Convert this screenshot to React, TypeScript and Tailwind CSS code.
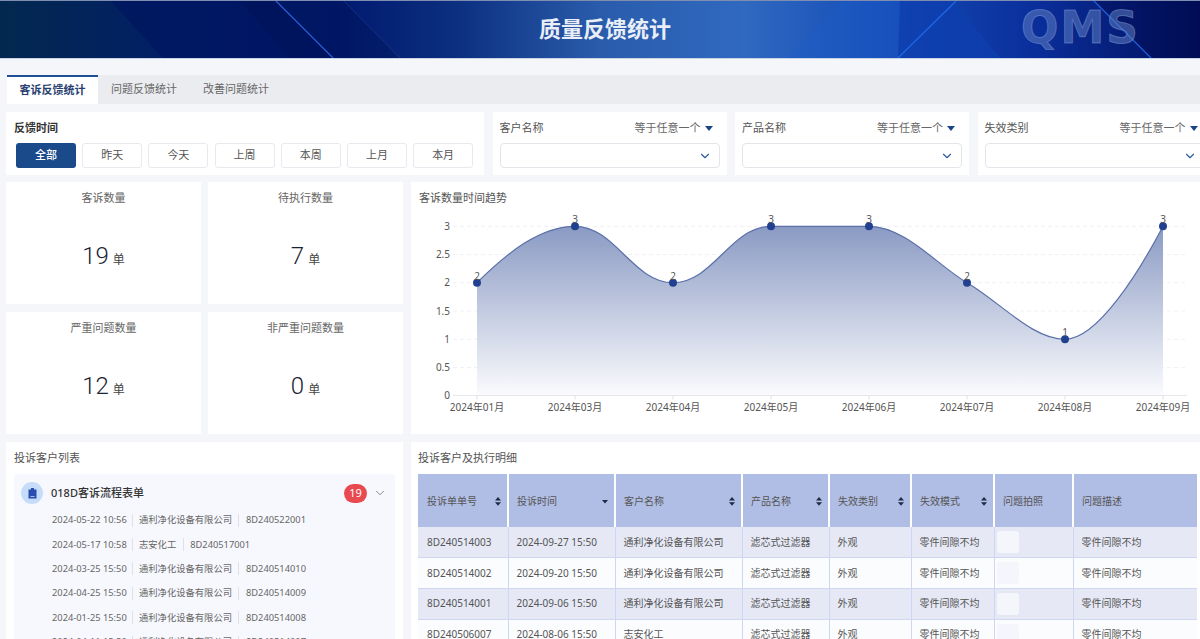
import { ChevronDown } from 'lucide-react'

const tabs = ['客诉反馈统计', '问题反馈统计', '改善问题统计']
const timeRanges = ['全部', '昨天', '今天', '上周', '本周', '上月', '本月']
const filters = ['客户名称', '产品名称', '失效类别']

const kpis = [
  { label: '客诉数量', value: 19 },
  { label: '待执行数量', value: 7 },
  { label: '严重问题数量', value: 12 },
  { label: '非严重问题数量', value: 0 },
]

const listRows = [
  ['2024-05-22 10:56', '通利净化设备有限公司', '8D240522001'],
  ['2024-05-17 10:58', '志安化工', '8D240517001'],
  ['2024-03-25 15:50', '通利净化设备有限公司', '8D240514010'],
  ['2024-04-25 15:50', '通利净化设备有限公司', '8D240514009'],
  ['2024-01-25 15:50', '通利净化设备有限公司', '8D240514008'],
  ['2024-04-11 15:50', '通利净化设备有限公司', '8D240514007'],
]

const columns = [
  { title: '投诉单单号', sort: 'both' },
  { title: '投诉时间', sort: 'down' },
  { title: '客户名称', sort: 'both' },
  { title: '产品名称', sort: 'both' },
  { title: '失效类别', sort: 'both' },
  { title: '失效模式', sort: 'both' },
  { title: '问题拍照', sort: 'none' },
  { title: '问题描述', sort: 'none' },
]

const tableRows = [
  ['8D240514003', '2024-09-27 15:50', '通利净化设备有限公司'],
  ['8D240514002', '2024-09-20 15:50', '通利净化设备有限公司'],
  ['8D240514001', '2024-09-06 15:50', '通利净化设备有限公司'],
  ['8D240506007', '2024-08-06 15:50', '志安化工'],
]

const yTicks = [
  { label: '3', y: 226.3 },
  { label: '2.5', y: 254.5 },
  { label: '2', y: 282.7 },
  { label: '1.5', y: 311 },
  { label: '1', y: 339.3 },
  { label: '0.5', y: 367.5 },
  { label: '0', y: 395.5 },
]

const points = [
  { x: 477, y: 282.7, v: 2, month: '2024年01月' },
  { x: 575, y: 226.3, v: 3, month: '2024年03月' },
  { x: 673, y: 282.7, v: 2, month: '2024年04月' },
  { x: 771, y: 226.3, v: 3, month: '2024年05月' },
  { x: 869, y: 226.3, v: 3, month: '2024年06月' },
  { x: 967, y: 282.7, v: 2, month: '2024年07月' },
  { x: 1065, y: 339.3, v: 1, month: '2024年08月' },
  { x: 1163, y: 226.3, v: 3, month: '2024年09月' },
]

const curve =
  'M477 282.7 C507 253 540 226.3 575 226.3 C615 226.3 633 282.7 673 282.7 C713 282.7 731 226.3 771 226.3 L869 226.3 C905 226.3 938 266 967 282.7 C1000 301.8 1032 339.3 1065 339.3 C1098 339.3 1140 270 1163 226.3'

function HeaderArt() {
  return (
    <svg className="absolute inset-0 h-full w-full" viewBox="0 0 1200 58" preserveAspectRatio="none">
      <polygon points="111,0 276,0 333,58 163,58" fill="#00125f" opacity="0.55" />
      <polygon points="240,0 344,0 400,58 290,58" fill="#00104f" opacity="0.3" />
      <polygon points="841,0 952,0 1000,58 788,58" fill="#1d5cc8" opacity="0.4" />
      <polygon points="900,0 952,0 1000,58 898,58" fill="#0a35a8" opacity="0.55" />
      <polygon points="1094,0 1200,0 1200,58 1151,58" fill="#000a48" opacity="0.35" />
      <line x1="276" y1="0" x2="333" y2="58" stroke="#2c5fd8" strokeWidth="1.2" />
      <line x1="344" y1="0" x2="400" y2="58" stroke="#3a5aa8" strokeWidth="0.6" opacity="0.6" />
      <line x1="956" y1="0" x2="898" y2="58" stroke="#1f6ae8" strokeWidth="1.2" />
      <line x1="1094" y1="0" x2="1151" y2="58" stroke="#1f62e0" strokeWidth="1.2" />
    </svg>
  )
}

function SortIcon({ sort }: { sort: string }) {
  if (sort === 'none') return null
  if (sort === 'down') {
    return (
      <svg width="6" height="4" viewBox="0 0 6 4" className="shrink-0">
        <polygon points="0,0 6,0 3,3.6" fill="#1f2a44" />
      </svg>
    )
  }
  return (
    <svg width="6" height="9" viewBox="0 0 6 9" className="shrink-0">
      <polygon points="3,0 6,3.6 0,3.6" fill="#1f2a44" />
      <polygon points="0,5.2 6,5.2 3,8.8" fill="#1f2a44" />
    </svg>
  )
}

function Caret() {
  return (
    <svg width="8" height="5" viewBox="0 0 8 5">
      <polygon points="0,0 8,0 4,5" fill="#1a4585" />
    </svg>
  )
}

function Trend() {
  return (
    <svg className="block h-[230px] w-[789px]" viewBox="411 204 789 230">
      <defs>
        <linearGradient id="areaFill" x1="0" y1="226" x2="0" y2="395" gradientUnits="userSpaceOnUse">
          <stop offset="0" stopColor="#8a9ac3" />
          <stop offset="1" stopColor="#fafbfd" />
        </linearGradient>
      </defs>
      {yTicks.slice(0, 6).map((t) => (
        <line key={t.label} x1="453" x2="1187" y1={t.y} y2={t.y} stroke="#f1f1f5" strokeWidth="1" strokeDasharray="4 3" />
      ))}
      {yTicks.map((t) => (
        <text key={t.label} x="450" y={t.y + 3.5} textAnchor="end" fontSize="10" fill="#555">
          {t.label}
        </text>
      ))}
      <path d={`${curve} L1163 395 L477 395 Z`} fill="url(#areaFill)" />
      <path d={curve} fill="none" stroke="#5a70aa" strokeWidth="1.2" />
      <line x1="453" x2="1187" y1="395.5" y2="395.5" stroke="#e6e6ec" strokeWidth="1" />
      {points.map((p) => (
        <g key={p.month}>
          <line x1={p.x} x2={p.x} y1="395.5" y2="399.5" stroke="#e0e0e6" strokeWidth="1" />
          <circle cx={p.x} cy={p.y} r="4" fill="#21408f" />
          <text x={p.x} y={p.y - 3} textAnchor="middle" fontSize="10" fill="#555">
            {p.v}
          </text>
          <text x={p.x} y="411" textAnchor="middle" fontSize="10" fill="#555">
            {p.month}
          </text>
        </g>
      ))}
    </svg>
  )
}

export default function App() {
  return (
    <div className="h-[639px] w-[1200px] overflow-hidden bg-[#f4f6fa] font-['Noto_Sans','Noto_Sans_CJK_SC',sans-serif] text-[11px] text-[#555]">
      {/* Banner */}
      <header className="relative h-[59px] overflow-hidden border-t border-b border-t-[#7f8db0] border-b-[#c9d3e6] bg-[linear-gradient(90deg,#03284f_0%,#011f66_14%,#00196e_28%,#0c2f80_38%,#2a5cab_50%,#2f69c0_62%,#1850b8_72%,#0a2f9c_86%,#020f5c_100%)]">
        <HeaderArt />
        <div className="relative flex h-full items-center justify-center pb-[3px] pl-[10px] text-[22px] font-bold text-[#e9eef7]">
          质量反馈统计
        </div>
        <div className="absolute left-[1021px] top-[-4px] font-['DejaVu_Sans'] text-[44px] font-bold leading-[62px] tracking-[2px] text-[#5f7fc4]/55 [-webkit-text-stroke:1px_rgba(140,165,215,0.45)]">
          QMS
        </div>
      </header>

      {/* Tabs */}
      <div className="ml-[7px] mt-[16px] flex h-[29px] bg-[#ebecf0]">
        {tabs.map((tab, i) => (
          <div
            key={tab}
            className={
              i === 0
                ? 'flex w-[91px] items-center justify-center border-t-2 border-t-[#1f4f96] bg-white font-bold text-[#27406e]'
                : 'flex w-[92px] items-center justify-center text-[#666]'
            }
          >
            {tab}
          </div>
        ))}
      </div>

      {/* Filters */}
      <div className="ml-[6px] mt-[8px] flex h-[63px] gap-[8.5px]">
        <div className="w-[478px] shrink-0 bg-white pl-[8px] pt-[8px]">
          <div className="text-[11px] font-bold leading-[16px] text-[#333]">反馈时间</div>
          <div className="ml-[2px] mt-[7px] flex gap-[6.2px]">
            {timeRanges.map((range, i) => (
              <div
                key={range}
                className={
                  i === 0
                    ? 'flex h-[25px] w-[60px] items-center justify-center rounded-[3px] bg-[#1a4a8a] font-medium text-white'
                    : 'flex h-[25px] w-[60px] items-center justify-center rounded-[3px] border border-[#e8e9ee] bg-white text-[#555]'
                }
              >
                {range}
              </div>
            ))}
          </div>
        </div>
        {filters.map((name) => (
          <div key={name} className="w-[234px] shrink-0 bg-white px-[7px] pt-[8px]">
            <div className="flex h-[16px] items-center justify-between leading-[16px]">
              <span>{name}</span>
              <span className="flex items-center gap-[4px] pr-[7px] text-[#666]">
                等于任意一个
                <Caret />
              </span>
            </div>
            <div className="mt-[7px] flex h-[25px] w-[220px] items-center justify-end rounded-[4px] border border-[#e3e5ea] pr-[7px]">
              <ChevronDown size={14} strokeWidth={2} className="text-[#2f5d9e]" />
            </div>
          </div>
        ))}
      </div>

      {/* KPI + trend */}
      <div className="ml-[6px] mt-[7px] flex h-[252px]">
        <div className="grid w-[397px] shrink-0 grid-cols-2 grid-rows-2 gap-x-[7px] gap-y-[8px]">
          {kpis.map((kpi) => (
            <div key={kpi.label} className="flex flex-col items-center bg-white pt-[8px]">
              <div className="leading-[16px] text-[#666]">{kpi.label}</div>
              <div className="mt-[32px] flex items-baseline gap-[4px] leading-[36px] text-[#1a2236]">
                <span className="font-['Roboto'] text-[24px] font-light">{kpi.value}</span>
                <span className="text-[12px] text-[#444]">单</span>
              </div>
            </div>
          ))}
        </div>
        <div className="ml-[8px] w-[789px] shrink-0 bg-white">
          <div className="pl-[8px] pt-[8px] leading-[16px]">客诉数量时间趋势</div>
          <div className="-mt-[2px]">
            <Trend />
          </div>
        </div>
      </div>

      {/* Bottom row */}
      <div className="ml-[6px] mt-[8px] flex h-[197px] overflow-hidden">
        <div className="w-[397px] shrink-0 bg-white pl-[8px] pr-[8px] pt-[8px]">
          <div className="leading-[16px]">投诉客户列表</div>
          <div className="mt-[8px] h-[200px] rounded-[4px] bg-[#f7f8fd] pl-[7px] pt-[8px]">
            <div className="flex h-[22px] items-center">
              <div className="flex h-[22px] w-[22px] items-center justify-center rounded-full bg-[#c6dcfb]">
                <svg width="9" height="11" viewBox="0 0 9 11">
                  <path d="M0.5 1.5h8v9h-8z M3 0h3v2H3z" fill="#2a4db0" />
                  <path d="M2.5 8h4v0.8h-4z" fill="#c6dcfb" />
                </svg>
              </div>
              <span className="ml-[8px] font-medium text-[#333]">018D客诉流程表单</span>
              <span className="ml-auto flex h-[19px] w-[23px] items-center justify-center rounded-full bg-[#e84a4f] text-white">
                19
              </span>
              <ChevronDown size={14} strokeWidth={1.5} className="ml-[6px] mr-[8px] text-[#777]" />
            </div>
            <div className="ml-[31px] mt-[4px] text-[9.3px] text-[#666]">
              {listRows.map((row) => (
                <div key={row[2]} className="flex h-[24.4px] items-center whitespace-nowrap">
                  <span className="w-[73px]">{row[0]}</span>
                  <span className="mx-[6.5px] h-[13px] w-px bg-[#dfe1e6]" />
                  <span>{row[1]}</span>
                  <span className="mx-[6.5px] h-[13px] w-px bg-[#dfe1e6]" />
                  <span>{row[2]}</span>
                </div>
              ))}
            </div>
          </div>
        </div>

        <div className="ml-[8px] w-[789px] shrink-0 bg-white pl-[7px] pt-[8px]">
          <div className="leading-[16px]">投诉客户及执行明细</div>
          <table className="mt-[8px] w-[779px] table-fixed border-collapse text-[10px]">
            <colgroup>
              <col className="w-[90px]" />
              <col className="w-[107px]" />
              <col className="w-[127px]" />
              <col className="w-[87px]" />
              <col className="w-[82px]" />
              <col className="w-[83px]" />
              <col className="w-[79px]" />
              <col className="w-[124px]" />
            </colgroup>
            <thead>
              <tr className="h-[53px] bg-[#b0bde4] text-[#555]">
                {columns.map((col, i) => (
                  <th key={col.title} className={i === 0 ? 'p-0 font-normal' : 'border-l-2 border-l-white p-0 font-normal'}>
                    <div className={i === 0 ? 'flex items-center justify-between pl-[9px] pr-[6px] pt-[2px]' : 'flex items-center justify-between pl-[8px] pr-[6px] pt-[2px]'}>
                      <span>{col.title}</span>
                      <SortIcon sort={col.sort} />
                    </div>
                  </th>
                ))}
              </tr>
            </thead>
            <tbody>
              {tableRows.map((row, r) => (
                <tr key={row[0]} className={r % 2 === 0 ? 'h-[30.8px] bg-[#e6e9f5]' : 'h-[30.8px] bg-[#fbfcfe]'}>
                  <td className="border-b border-[#cfd6f0] pl-[9px]">{row[0]}</td>
                  <td className="border-b border-l border-[#cfd6f0] pl-[8px]">{row[1]}</td>
                  <td className="border-b border-l border-[#cfd6f0] pl-[8px]">{row[2]}</td>
                  <td className="border-b border-l border-[#cfd6f0] pl-[8px]">滤芯式过滤器</td>
                  <td className="border-b border-l border-[#cfd6f0] pl-[8px]">外观</td>
                  <td className="border-b border-l border-[#cfd6f0] pl-[8px]">零件间隙不均</td>
                  <td className="border-b border-l border-[#cfd6f0] pl-[2px]">
                    <div className="h-[22px] w-[22px] rounded-[3px] bg-[#f5f6fb]" />
                  </td>
                  <td className="border-b border-l border-[#cfd6f0] pl-[8px]">零件间隙不均</td>
                </tr>
              ))}
            </tbody>
          </table>
        </div>
      </div>
    </div>
  )
}
